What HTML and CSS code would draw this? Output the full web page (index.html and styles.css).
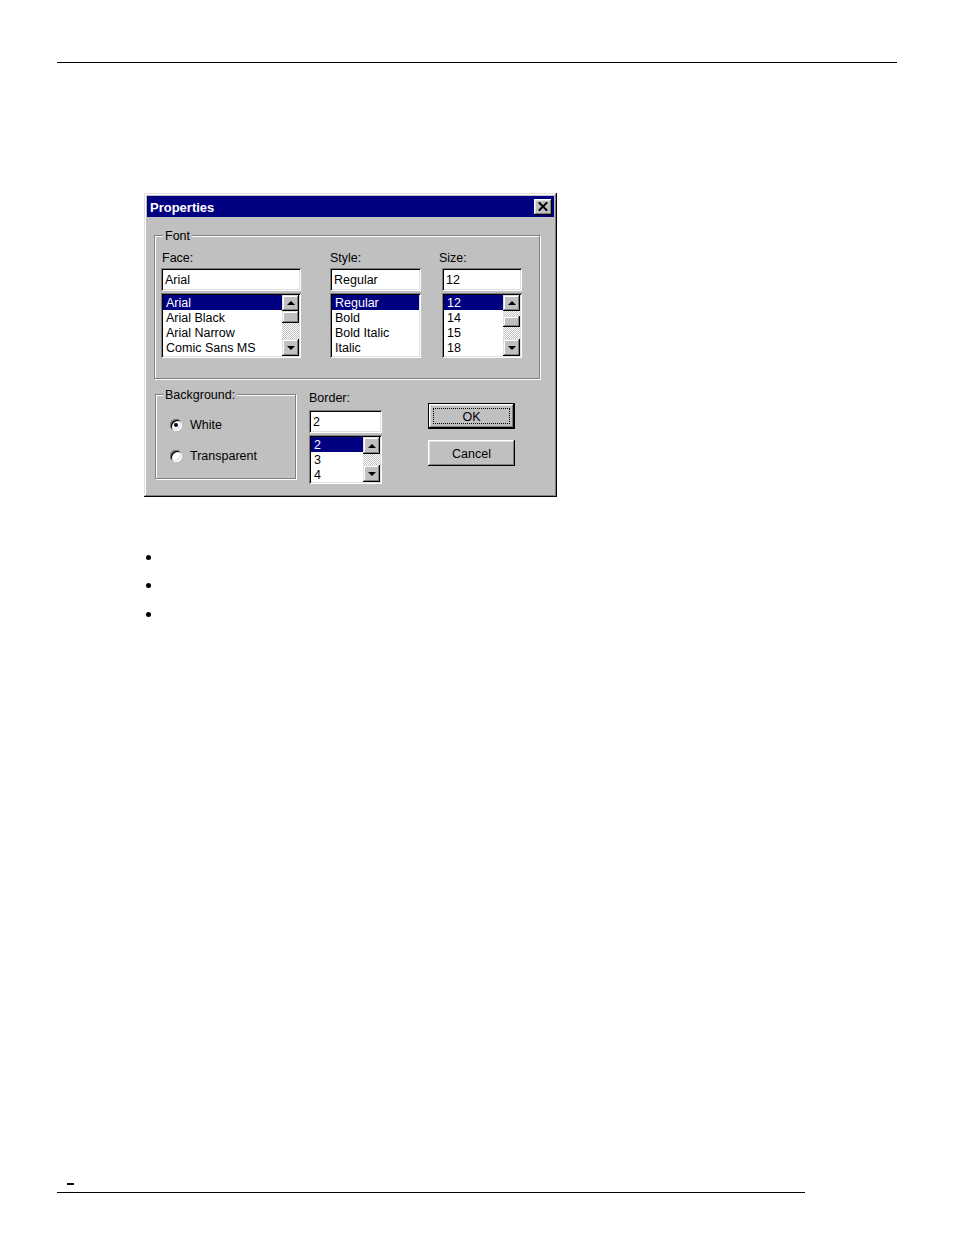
FILE: index.html
```html
<!DOCTYPE html>
<html>
<head>
<meta charset="utf-8">
<title>Properties</title>
<link rel="stylesheet" href="styles.css">
</head>
<body>
<div class="page">
  <div class="rule-top"></div>

  <div class="dialog">
    <div class="titlebar">
      <span class="title">Properties</span>
      <span class="close-btn"><svg width="10" height="9" viewBox="0 0 10 9"><path d="M0.8 0.3 L9.2 8.7 M9.2 0.3 L0.8 8.7" stroke="#000" stroke-width="2" fill="none"/></svg></span>
    </div>

    <div class="group group-font">
      <div class="group-label">Font</div>
      <div class="font-cols">
        <div class="col col-face">
          <div class="field-label label-face">Face:</div>
          <div class="textbox">Arial</div>
          <div class="listbox">
            <div class="list-items">
              <div class="item selected">Arial</div>
              <div class="item">Arial Black</div>
              <div class="item">Arial Narrow</div>
              <div class="item">Comic Sans MS</div>
            </div>
            <div class="scrollbar">
              <div class="sb-btn sb-up-16"><svg width="8" height="4" viewBox="0 0 8 4"><polygon points="4,0 8,4 0,4" fill="#000"/></svg></div>
              <div class="sb-thumb thumb-12"></div>
              <div class="sb-track track-16"></div>
              <div class="sb-btn sb-down-17"><svg width="8" height="4" viewBox="0 0 8 4"><polygon points="0,0 8,0 4,4" fill="#000"/></svg></div>
            </div>
          </div>
        </div>

        <div class="col col-style">
          <div class="field-label">Style:</div>
          <div class="textbox">Regular</div>
          <div class="listbox">
            <div class="list-items">
              <div class="item selected">Regular</div>
              <div class="item">Bold</div>
              <div class="item">Bold Italic</div>
              <div class="item">Italic</div>
            </div>
          </div>
        </div>

        <div class="col col-size">
          <div class="field-label label-size">Size:</div>
          <div class="textbox">12</div>
          <div class="listbox">
            <div class="list-items">
              <div class="item selected">12</div>
              <div class="item">14</div>
              <div class="item">15</div>
              <div class="item">18</div>
            </div>
            <div class="scrollbar">
              <div class="sb-btn sb-up-16"><svg width="8" height="4" viewBox="0 0 8 4"><polygon points="4,0 8,4 0,4" fill="#000"/></svg></div>
              <div class="sb-track track-5"></div>
              <div class="sb-thumb thumb-11"></div>
              <div class="sb-track track-12"></div>
              <div class="sb-btn sb-down-17"><svg width="8" height="4" viewBox="0 0 8 4"><polygon points="0,0 8,0 4,4" fill="#000"/></svg></div>
            </div>
          </div>
        </div>
      </div>
    </div>

    <div class="row2">
      <div class="group group-bg">
        <div class="group-label label-bg">Background:</div>
        <div class="radio-row radio-first">
          <span class="radio checked"></span>
          <span>White</span>
        </div>
        <div class="radio-row radio-second">
          <span class="radio"></span>
          <span>Transparent</span>
        </div>
      </div>

      <div class="col col-border">
        <div class="field-label label-border">Border:</div>
        <div class="textbox">2</div>
        <div class="listbox listbox-short">
          <div class="list-items">
            <div class="item selected">2</div>
            <div class="item">3</div>
            <div class="item">4</div>
          </div>
          <div class="scrollbar">
            <div class="sb-btn sb-up-17"><svg width="8" height="4" viewBox="0 0 8 4"><polygon points="4,0 8,4 0,4" fill="#000"/></svg></div>
            <div class="sb-track track-11"></div>
            <div class="sb-btn sb-down-17"><svg width="8" height="4" viewBox="0 0 8 4"><polygon points="0,0 8,0 4,4" fill="#000"/></svg></div>
          </div>
        </div>
      </div>

      <div class="btn-col">
        <div class="btn btn-default"><span class="focus">OK</span></div>
        <div class="btn">Cancel</div>
      </div>
    </div>
  </div>

  <ul class="bullets">
    <li></li>
    <li></li>
    <li></li>
  </ul>

  <div class="footer">
    <div class="dash"></div>
    <div class="rule-bottom"></div>
  </div>
</div>
</body>
</html>
```

FILE: styles.css
```css
* { box-sizing: border-box; }

body {
  margin: 0;
  background: #fff;
  color: #000;
  font-family: "Liberation Sans", Arial, sans-serif;
  font-size: 12.5px;
}

.page {
  height: 1235px;
  display: flex;
  flex-direction: column;
  overflow: hidden;
}

.rule-top {
  flex: none;
  margin: 62px 0 0 57px;
  width: 840px;
  height: 1px;
  background: #000;
}

/* Dialog frame */
.dialog {
  flex: none;
  margin: 130px 0 0 144px;
  width: 413px;
  height: 304px;
  padding: 3px;
  background: #c0c0c0;
  box-shadow: inset -1px -1px #000, inset 1px 1px #dfdfdf, inset -2px -2px #808080, inset 2px 2px #fff;
  display: flex;
  flex-direction: column;
}

.titlebar {
  flex: none;
  height: 21px;
  background: #000080;
  display: flex;
  align-items: center;
  justify-content: space-between;
  padding: 0 2px 0 3px;
}

.title {
  color: #fff;
  font-weight: bold;
  font-size: 13px;
  height: 21px;
  line-height: 23px;
}

.close-btn {
  width: 18px;
  height: 16px;
  background: #c0c0c0;
  box-shadow: inset -1px -1px #000, inset 1px 1px #fff, inset -2px -2px #808080, inset 2px 2px #dfdfdf;
  display: flex;
  align-items: center;
  justify-content: center;
  padding-bottom: 1px;
}

.close-btn svg { display: block; }

/* Group boxes */
.group {
  flex: none;
  border: 1px solid #808080;
  box-shadow: inset 1px 1px #fff, 1px 1px #fff;
}

.group-font {
  margin: 18px 0 0 7px;
  width: 386px;
  height: 144px;
}

.group-label {
  width: fit-content;
  margin: -8px 0 0 8px;
  padding: 0 2px;
  line-height: 16px;
  height: 14px;
  background: #c0c0c0;
}

.label-bg { margin-left: 7px; }

.font-cols {
  display: flex;
  margin-top: 8px;
  padding-left: 6px;
}

.col {
  display: flex;
  flex-direction: column;
}

.col-face { width: 140px; }
.col-style { width: 91px; margin-left: 29px; }
.col-size { width: 80px; margin-left: 21px; }

.field-label {
  height: 14px;
  line-height: 16px;
  margin-bottom: 4px;
}

.label-face { padding-left: 1px; }
.label-size { margin-left: -3px; }

.textbox {
  height: 23px;
  line-height: 25px;
  padding-left: 4px;
  background: #fff;
  box-shadow: inset 1px 1px #808080, inset -1px -1px #fff, inset 2px 2px #000, inset -2px -2px #dfdfdf;
}

.listbox {
  margin-top: 2px;
  height: 65px;
  padding: 2px;
  background: #fff;
  box-shadow: inset 1px 1px #808080, inset -1px -1px #fff, inset 2px 2px #000, inset -2px -2px #dfdfdf;
  display: flex;
}

.listbox-short { height: 49px; }

.list-items {
  flex: 1;
  min-width: 0;
}

.item {
  height: 15px;
  line-height: 17px;
  padding-left: 3px;
  white-space: nowrap;
}

.item.selected {
  background: #000080;
  color: #fff;
}

/* Scrollbars */
.scrollbar {
  width: 17px;
  flex: none;
  display: flex;
  flex-direction: column;
}

.sb-btn,
.sb-thumb {
  background: #c0c0c0;
  box-shadow: inset -1px -1px #000, inset 1px 1px #dfdfdf, inset -2px -2px #808080, inset 2px 2px #fff;
}

.sb-btn {
  display: flex;
  align-items: center;
  justify-content: center;
}

.sb-btn svg { display: block; }

.sb-up-16 { height: 16px; }
.sb-up-17 { height: 17px; }
.sb-down-17 { height: 17px; }

.thumb-11 { height: 11px; }
.thumb-12 { height: 12px; }

.sb-track {
  background: repeating-conic-gradient(#c0c0c0 0 25%, #fff 0 50%) 0 0 / 2px 2px;
}

.track-5 { height: 5px; }
.track-11 { height: 11px; }
.track-12 { height: 12px; }
.track-16 { height: 16px; }

/* Second row */
.row2 {
  flex: none;
  display: flex;
  align-items: flex-start;
  margin-top: 7px;
}

.group-bg {
  margin: 8px 0 0 8px;
  width: 141px;
  height: 85px;
}

.radio-row {
  display: flex;
  align-items: center;
  height: 16px;
  line-height: 18px;
  padding-left: 14px;
  gap: 8px;
}

.radio-first { margin-top: 16px; }
.radio-second { margin-top: 15px; }

.radio {
  width: 12px;
  height: 12px;
  border-radius: 50%;
  background: #fff;
  box-shadow: inset 1px 1px #808080, inset -1px -1px #fff, inset 2px 2px #000, inset -2px -2px #dfdfdf;
  display: flex;
  align-items: center;
  justify-content: center;
}

.radio.checked::after {
  content: "";
  width: 4px;
  height: 4px;
  border-radius: 50%;
  background: #000;
}

.col-border {
  width: 73px;
  margin-left: 13px;
  padding-top: 4px;
}

.label-border { margin-bottom: 6px; }

.btn-col {
  display: flex;
  flex-direction: column;
  gap: 11px;
  margin-left: 46px;
  padding-top: 17px;
}

.btn {
  width: 87px;
  height: 26px;
  line-height: 16px;
  padding-top: 1px;
  background: #c0c0c0;
  box-shadow: inset -1px -1px #000, inset 1px 1px #fff, inset -2px -2px #808080, inset 2px 2px #dfdfdf;
  display: flex;
  align-items: center;
  justify-content: center;
}

.btn-default {
  border: 1px solid #000;
  padding: 4px;
}

.focus {
  flex: 1;
  align-self: stretch;
  border: 1px dotted #000;
  display: flex;
  align-items: center;
  justify-content: center;
  padding-top: 1px;
}

/* Bullets */
.bullets {
  flex: none;
  list-style: none;
  margin: 46px 0 0 146px;
  padding: 0;
}

.bullets li {
  height: 28.5px;
  display: flex;
  align-items: center;
}

.bullets li::before {
  content: "";
  width: 5px;
  height: 5px;
  border-radius: 50%;
  background: #000;
}

/* Footer */
.footer {
  flex: none;
  margin-top: auto;
  padding-bottom: 42px;
}

.dash {
  margin-left: 67px;
  width: 7px;
  height: 2px;
  background: #000;
  margin-bottom: 7px;
}

.rule-bottom {
  margin-left: 57px;
  width: 748px;
  height: 1px;
  background: #000;
}
```
